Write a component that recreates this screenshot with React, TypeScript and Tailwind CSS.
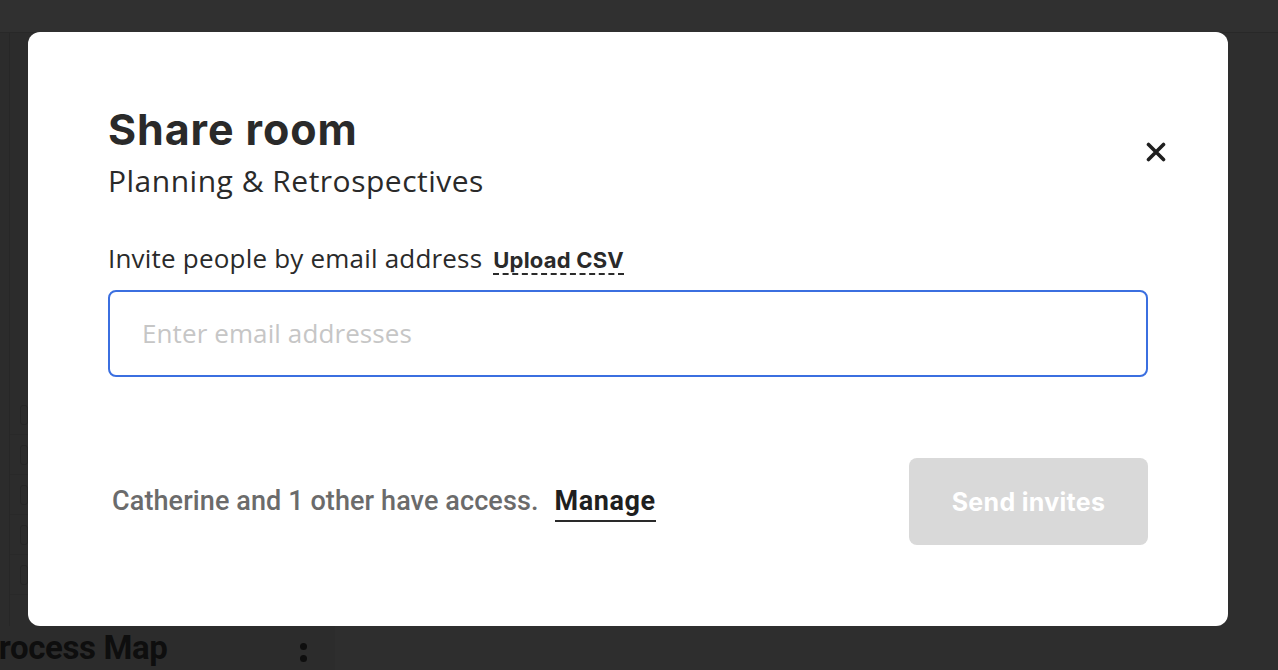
import React from "react";

export default function App() {
  return (
    <div className="relative w-[1278px] h-[670px] overflow-hidden bg-[#2c2c2c]" style={{ fontFamily: "Inter, 'Open Sans', sans-serif" }}>
      {/* background app */}
      <div className="flex flex-col h-full">
        <div className="h-[33px] bg-[#303030] border-b border-[#282828]" />
        <div className="flex flex-1">
          <div className="w-[335px] flex flex-col">
            <div className="flex-1 flex">
              <div className="w-[10px] border-r border-[#272727]" />
              <div className="flex-1 flex flex-col pt-[362px]">
                {[0, 1, 2, 3, 4].map((i) => (
                  <div key={i} className="h-[40px] border-b border-[#292929] flex items-center pl-[10px]">
                    <div className="w-[8px] h-[20px] rounded-[3px] border border-[#262626]" />
                  </div>
                ))}
              </div>
            </div>
            <div className="h-[44px] flex items-center justify-between pr-[28px]">
              <span className="ml-[-22px] text-[33px] font-bold text-[#0e0e0e] tracking-[-0.4px]" style={{ fontFamily: "Roboto, sans-serif" }}>
                Process Map
              </span>
              <span className="flex flex-col gap-[5px] mt-[8px]">
                <span className="w-[7px] h-[7px] rounded-full bg-[#0e0e0e]" />
                <span className="w-[7px] h-[7px] rounded-full bg-[#0e0e0e]" />
              </span>
            </div>
          </div>
          <div className="flex-1 bg-[#2e2e2e]" />
        </div>
      </div>

      {/* modal */}
      <div className="absolute left-[28px] top-[32px] w-[1200px] h-[594px] bg-white rounded-[12px] px-[80px] pt-[74px]">
        <div className="flex justify-between items-start">
          <div>
            <h1 className="text-[43px] leading-[46px] font-bold text-[#2a2a2a] tracking-[0.9px]">Share room</h1>
            <p className="mt-[10px] text-[30px] leading-[38px] tracking-[0.5px] text-[#2a2a2a]" style={{ fontFamily: "'Open Sans', sans-serif" }}>
              Planning &amp; Retrospectives
            </p>
          </div>
          <button className="mt-[36px] mr-[-18px] text-[#1f1f1f]" aria-label="Close">
            <svg width="20" height="20" viewBox="0 0 20 20">
              <path d="M2.5 2.5 L17.5 17.5 M17.5 2.5 L2.5 17.5" stroke="currentColor" strokeWidth="3.6" strokeLinecap="round" />
            </svg>
          </button>
        </div>

        <div className="mt-[43px] flex items-baseline gap-[11px] leading-[30px]">
          <span className="text-[26px] tracking-[0.2px] text-[#2a2a2a]" style={{ fontFamily: "'Open Sans', sans-serif" }}>Invite people by email address</span>
          <span className="font-bold text-[#2a2a2a] text-[22px] border-b-2 border-dashed border-[#2a2a2a] leading-[26px] tracking-[0.2px]">Upload CSV</span>
        </div>

        <div className="mt-[15px] h-[87px] border-2 border-[#3b6fe0] rounded-[8px] flex items-center px-[32px]">
          <span className="text-[26px] tracking-[0.1px] text-[#c6c6c6]" style={{ fontFamily: "'Open Sans', sans-serif" }}>Enter email addresses</span>
        </div>

        <div className="mt-[81px] flex items-center justify-between">
          <div className="flex items-start gap-[16px] pl-[4px] mt-[3px]">
            <span className="text-[27px] leading-[34px] font-medium text-[#6b6b6b] tracking-[0.1px]" style={{ fontFamily: "Roboto, sans-serif" }}>
              Catherine and 1 other have access.
            </span>
            <span className="text-[27px] leading-[34px] font-bold text-[#1f1f1f] border-b-2 border-[#2a2a2a] pb-[2px] tracking-[0.6px]" style={{ fontFamily: "Roboto, sans-serif" }}>
              Manage
            </span>
          </div>
          <button className="w-[239px] h-[87px] pt-[3px] rounded-[8px] bg-[#d9d9d9] text-white text-[25px] font-bold tracking-[0.3px]">
            Send invites
          </button>
        </div>
      </div>
    </div>
  );
}
